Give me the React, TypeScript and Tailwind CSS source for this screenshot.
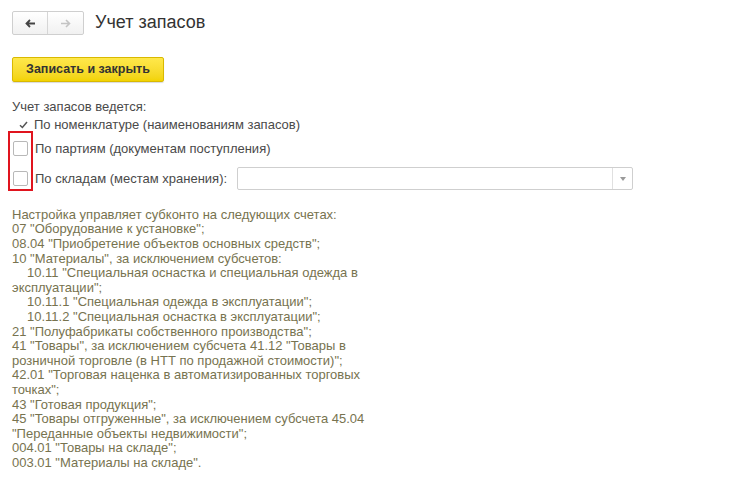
import React from "react";

const lines: { text: string; indent?: boolean }[] = [
  { text: "Настройка управляет субконто на следующих счетах:" },
  { text: "07 \"Оборудование к установке\";" },
  { text: "08.04 \"Приобретение объектов основных средств\";" },
  { text: "10 \"Материалы\", за исключением субсчетов:" },
  { text: "10.11 \"Специальная оснастка и специальная одежда в", indent: true },
  { text: "эксплуатации\";" },
  { text: "10.11.1 \"Специальная одежда в эксплуатации\";", indent: true },
  { text: "10.11.2 \"Специальная оснастка в эксплуатации\";", indent: true },
  { text: "21 \"Полуфабрикаты собственного производства\";" },
  { text: "41 \"Товары\", за исключением субсчета 41.12 \"Товары в" },
  { text: "розничной торговле (в НТТ по продажной стоимости)\";" },
  { text: "42.01 \"Торговая наценка в автоматизированных торговых" },
  { text: "точках\";" },
  { text: "43 \"Готовая продукция\";" },
  { text: "45 \"Товары отгруженные\", за исключением субсчета 45.04" },
  { text: "\"Переданные объекты недвижимости\";" },
  { text: "004.01 \"Товары на складе\";" },
  { text: "003.01 \"Материалы на складе\"." },
];

const Checkbox = () => (
  <span className="block w-[15px] h-[15px] border border-[#b8b8b8] rounded-[2px] bg-white" />
);

export default function App() {
  return (
    <div className="w-[749px] h-[485px] bg-white text-[#333] font-['Liberation_Sans',Arial,sans-serif] px-3 pt-[11px]">
      {/* header */}
      <div className="flex items-center gap-[11px] h-[24px]">
        <div className="flex h-[24px] border border-[#cfcfcf] rounded-[2px] bg-gradient-to-b from-white to-[#f1f1f1]">
          <button className="w-[35px] flex items-center justify-center border-r border-[#d6d6d6]">
            <svg width="11" height="9" viewBox="0 0 11 9">
              <path d="M5 1 L1.5 4.5 L5 8 M1.5 4.5 H10" stroke="#444" strokeWidth="1.8" fill="none" />
            </svg>
          </button>
          <button className="w-[35px] flex items-center justify-center">
            <svg width="11" height="9" viewBox="0 0 11 9">
              <path d="M6 1 L9.5 4.5 L6 8 M9.5 4.5 H1" stroke="#c4c4c4" strokeWidth="1.6" fill="none" />
            </svg>
          </button>
        </div>
        <h1 className="text-[18px] leading-none text-[#333] pb-[2px]">Учет запасов</h1>
      </div>

      {/* command bar */}
      <div className="mt-[21px]">
        <button className="h-[25px] w-[152px] rounded-[2px] border border-[#d9b900] bg-gradient-to-b from-[#ffe84a] to-[#f2d300] text-[12.5px] font-bold text-[#333] shadow-[0_1px_1px_rgba(0,0,0,0.15)]">
          Записать и закрыть
        </button>
      </div>

      {/* settings */}
      <div className="mt-[17px] text-[13px] text-[#4a4a4a]">
        <div className="h-[15px] leading-[15px]">Учет запасов ведется:</div>
        <div className="flex items-center h-[18px] mt-[2px]">
          <span className="w-[22px] flex items-center justify-center">
            <svg width="9" height="8" viewBox="0 0 9 8">
              <path d="M1 4.2 L3.4 6.5 L8 1" stroke="#555" strokeWidth="1.5" fill="none" />
            </svg>
          </span>
          <span>По номенклатуре (наименованиям запасов)</span>
        </div>
        <div className="relative mt-[4px] w-fit">
          <div className="absolute left-[-4px] top-[-7px] w-[25px] h-[60px] border-2 border-[#e0141e]" />
          <div className="flex items-center h-[22px] gap-[7px] pl-[1px]">
            <Checkbox />
            <span>По партиям (документам поступления)</span>
          </div>
          <div className="flex items-center h-[24px] mt-[7px] gap-[7px] pl-[1px]">
            <Checkbox />
            <span className="w-[195px]">По складам (местам хранения):</span>
            <div className="flex h-[23px] w-[396px] border border-[#cfcfcf] rounded-[2px] bg-white">
              <div className="flex-1" />
              <div className="w-[20px] border-l border-[#e0e0e0] flex items-center justify-center">
                <svg width="6" height="4" viewBox="0 0 6 4">
                  <path d="M0 0 H6 L3 4 Z" fill="#9a9a9a" />
                </svg>
              </div>
            </div>
          </div>
        </div>
      </div>

      {/* info text */}
      <div className="mt-[17px] text-[13px] leading-[14.6px] text-[#77734f]">
        {lines.map((l, i) => (
          <div key={i} className={l.indent ? "pl-[15px]" : ""}>
            {l.text}
          </div>
        ))}
      </div>
    </div>
  );
}
